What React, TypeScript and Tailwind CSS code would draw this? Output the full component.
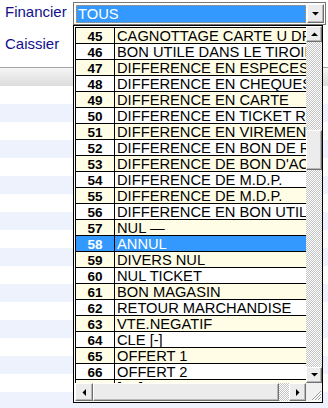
import React from 'react';

const ITEMS: [number, string][] = [
  [45, 'CAGNOTTAGE CARTE U DRIVE'],
  [46, 'BON UTILE DANS LE TIROIR'],
  [47, 'DIFFERENCE EN ESPECES'],
  [48, 'DIFFERENCE EN CHEQUES'],
  [49, 'DIFFERENCE EN CARTE'],
  [50, 'DIFFERENCE EN TICKET RESTAURANT'],
  [51, 'DIFFERENCE EN VIREMENT'],
  [52, 'DIFFERENCE EN BON DE REDUCTION'],
  [53, "DIFFERENCE DE BON D'ACHAT"],
  [54, 'DIFFERENCE DE M.D.P.'],
  [55, 'DIFFERENCE DE M.D.P.'],
  [56, 'DIFFERENCE EN BON UTILE'],
  [57, 'NUL —'],
  [58, 'ANNUL'],
  [59, 'DIVERS NUL'],
  [60, 'NUL TICKET'],
  [61, 'BON MAGASIN'],
  [62, 'RETOUR MARCHANDISE'],
  [63, 'VTE.NEGATIF'],
  [64, 'CLE [-]'],
  [65, 'OFFERT 1'],
  [66, 'OFFERT 2'],
  [67, '[%-] DDT'],
];

const SELECTED = 58;

type Dir = 'up' | 'down' | 'left' | 'right';

const Arrow: React.FC<{ dir: Dir }> = ({ dir }) => {
  const pts: Record<Dir, string> = {
    up: '0,4 7,4 3.5,0.5',
    down: '0,0 7,0 3.5,3.5',
    left: '4,0 4,7 0.5,3.5',
    right: '0,0 0,7 3.5,3.5',
  };
  const vertical = dir === 'up' || dir === 'down';
  return (
    <svg width={vertical ? 7 : 4} height={vertical ? 4 : 7} viewBox={vertical ? '0 0 7 4' : '0 0 4 7'}>
      <polygon points={pts[dir]} fill="#000" />
    </svg>
  );
};

// classic raised 3D button face
const raised =
  'shrink-0 bg-[#ececec] border border-t-white border-l-white border-r-[#707070] border-b-[#707070] shadow-[inset_-1px_-1px_0_#b8b8b8]';

const checker = 'shrink-0 bg-[repeating-conic-gradient(#c4c4c4_0_25%,#ffffff_0_50%)] bg-[length:2px_2px]';

export default function App() {
  return (
    <div className="relative w-[328px] h-[408px] bg-white overflow-hidden font-['Liberation_Sans',Arial,sans-serif]">
      {/* Filters */}
      <div className="flex h-[67px]">
        <div className="w-[73px] pl-[5px] pt-[3px] text-[15px] leading-[18px] text-[#10108c]">
          <div>Financier</div>
          <div className="mt-[14px]">Caissier</div>
        </div>

        {/* Combo box */}
        <div className="mt-[2px] w-[253px] h-[23px] border border-[#767676] bg-white flex items-center pl-[2px] pr-[1px]">
          <div className="w-[230px] h-[18px] bg-[#3399ff] border border-dotted border-[#d09050] text-white text-[14.7px] leading-[16px] pl-[1px]">
            TOUS
          </div>
          <div className={`ml-[1px] w-[17px] h-[19px] flex items-center justify-center ${raised}`}>
            <Arrow dir="down" />
          </div>
        </div>
      </div>

      {/* Grid behind the dropdown */}
      <div className="h-[19px] border-t border-[#a4a4a4] bg-linear-to-b from-[#f6f6f6] to-[#dcdcdc]" />
      <div className="flex flex-col">
        {Array.from({ length: 18 }).map((_, i) => (
          <div key={i} className={`h-[18px] ${i % 2 === 1 ? 'bg-[#edf2fc]' : 'bg-white'}`} />
        ))}
      </div>

      {/* Dropdown list */}
      <div className="absolute left-[73px] top-[25px] w-[250px] h-[378px] border border-black bg-white grid grid-cols-[232px_16px] grid-rows-[357px_18px]">
        {/* Rows */}
        <div className="overflow-hidden pl-[1px] pt-[1px]">
          <div className="border-l border-t border-black">
            {ITEMS.map(([num, label]) => {
              const selected = num === SELECTED;
              const bg = selected
                ? 'bg-[#3399ff] text-white'
                : num % 2 === 1
                  ? 'bg-[#fffde6] text-black'
                  : 'bg-white text-black';
              return (
                <div key={num} className={`flex h-[16px] border-b border-black ${bg}`}>
                  <div className="w-[39px] shrink-0 border-r border-black overflow-hidden text-center font-bold text-[13.5px] leading-[17px]">
                    {num}
                  </div>
                  <div className="flex-1 overflow-hidden whitespace-nowrap pl-[2px] text-[14.7px] leading-[17px]">
                    {label}
                  </div>
                </div>
              );
            })}
          </div>
        </div>

        {/* Vertical scrollbar */}
        <div className="flex flex-col overflow-hidden">
          <div className={`h-[16px] flex items-center justify-center ${raised}`}>
            <Arrow dir="up" />
          </div>
          <div className={`h-[88px] ${checker}`} />
          <div className={`h-[40px] ${raised}`} />
          <div className={`h-[197px] ${checker}`} />
          <div className={`h-[16px] flex items-center justify-center ${raised}`}>
            <Arrow dir="down" />
          </div>
        </div>

        {/* Horizontal scrollbar */}
        <div className="flex pl-[1px] overflow-hidden">
          <div className={`w-[18px] flex items-center justify-center ${raised}`}>
            <Arrow dir="left" />
          </div>
          <div className={`w-[186px] ${raised}`} />
          <div className={`w-[10px] ${checker}`} />
          <div className={`w-[17px] flex items-center justify-center ${raised}`}>
            <Arrow dir="right" />
          </div>
        </div>

        {/* Size grip corner */}
        <div className="bg-[#f0f0f0] flex items-end justify-end">
          <svg width="11" height="11" viewBox="0 0 11 11">
            <path d="M10 1 L1 10 M10 4 L4 10 M10 7 L7 10" stroke="#a0a0a0" strokeWidth="1" />
            <path d="M11 2 L2 11 M11 5 L5 11 M11 8 L8 11" stroke="#ffffff" strokeWidth="1" />
          </svg>
        </div>
      </div>
    </div>
  );
}
